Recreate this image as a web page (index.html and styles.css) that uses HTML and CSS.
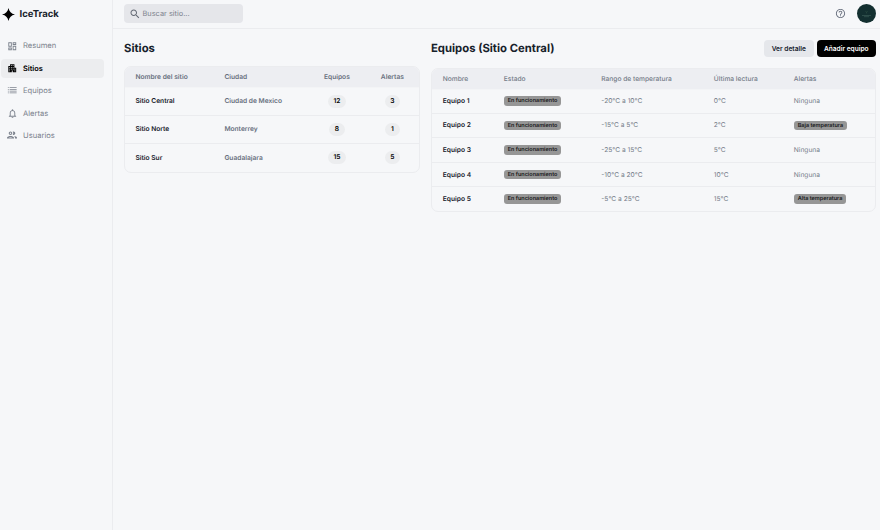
FILE: index.html
```html
<!DOCTYPE html>
<html lang="es">
<head>
<meta charset="utf-8">
<title>IceTrack</title>
<link rel="stylesheet" href="styles.css">
</head>
<body>
<div class="app">
  <aside class="sidebar">
    <div class="brand">
      <svg class="logo" viewBox="0 0 24 24"><path d="M12 0C13.5 7 17 10.500 24 12C17 13.500 13.500 17 12 24C10.500 17 7 13.500 0 12C7 10.500 10.500 7 12 0Z"/></svg>
      <span>IceTrack</span>
    </div>
    <nav class="nav">
      <a class="item"><svg viewBox="0 0 24 24"><path d="M19 5v2h-4V5h4M9 5v6H5V5h4m10 8v6h-4v-6h4M9 17v2H5v-2h4M21 3h-8v6h8V3zM11 3H3v10h8V3zm10 8h-8v10h8V11zm-10 4H3v6h8v-6z"/></svg><span>Resumen</span></a>
      <a class="item active"><svg viewBox="0 0 24 24"><path d="M17 11V3H7v4H3v14h8v-4h2v4h8V11h-4zM7 19H5v-2h2v2zm0-4H5v-2h2v2zm0-4H5V9h2v2zm4 4H9v-2h2v2zm0-4H9V9h2v2zm0-4H9V5h2v2zm4 8h-2v-2h2v2zm0-4h-2V9h2v2zm0-4h-2V5h2v2zm4 12h-2v-2h2v2zm0-4h-2v-2h2v2z"/></svg><span>Sitios</span></a>
      <a class="item"><svg viewBox="0 0 24 24"><path d="M2 5h2v2H2zM2 9h2v2H2zM2 13h2v2H2zM2 17h2v2H2zM6 5h16v2H6zM6 9h16v2H6zM6 13h16v2H6zM6 17h16v2H6z"/></svg><span>Equipos</span></a>
      <a class="item"><svg class="bell" viewBox="0 0 24 24"><path d="M12 22c1.100 0 2-.9 2-2h-4c0 1.100.9 2 2 2zm6-6v-5c0-3.070-1.630-5.640-4.500-6.320V4c0-.83-.67-1.500-1.500-1.500s-1.500.67-1.500 1.500v.68C7.640 5.360 6 7.920 6 11v5l-2 2v1h16v-1l-2-2zm-2 1H8v-6c0-2.480 1.510-4.500 4-4.500s4 2.020 4 4.500v6z"/></svg><span>Alertas</span></a>
      <a class="item"><svg class="wide" viewBox="0 0 24 24"><path d="M9 13.750c-2.340 0-7 1.170-7 3.500V19h14v-1.750c0-2.330-4.660-3.500-7-3.500zM4.340 17c.84-.58 2.870-1.250 4.660-1.250s3.820.67 4.660 1.250H4.340zM9 12c1.930 0 3.500-1.570 3.500-3.500S10.930 5 9 5 5.500 6.570 5.500 8.500 7.070 12 9 12zm0-5c.83 0 1.500.67 1.500 1.500S9.830 10 9 10s-1.500-.67-1.500-1.500S8.170 7 9 7zm7.040 6.810c1.160.84 1.960 1.960 1.960 3.440V19h4v-1.750c0-2.020-3.500-3.170-5.960-3.440zM15 12c1.930 0 3.500-1.570 3.500-3.500S16.930 5 15 5c-.54 0-1.040.13-1.500.35.630.89 1 1.980 1 3.150s-.37 2.260-1 3.150c.46.22.96.35 1.500.35z"/></svg><span>Usuarios</span></a>
    </nav>
  </aside>
  <div class="page">
    <header class="topbar">
      <div class="search"><svg viewBox="0 0 24 24"><path d="M15.500 14h-.79l-.28-.27C15.410 12.590 16 11.110 16 9.500 16 5.910 13.090 3 9.500 3S3 5.910 3 9.500 5.910 16 9.500 16c1.610 0 3.090-.59 4.230-1.570l.27.28v.79l5 4.990L20.490 19l-4.990-5zm-6 0C7.010 14 5 11.990 5 9.500S7.010 5 9.500 5 14 7.010 14 9.500 11.990 14 9.500 14z"/></svg><span>Buscar sitio...</span></div>
      <div class="tools">
        <svg class="help" viewBox="0 0 24 24"><path d="M11 18h2v-2h-2v2zm1-16C6.480 2 2 6.480 2 12s4.480 10 10 10 10-4.480 10-10S17.520 2 12 2zm0 18c-4.410 0-8-3.590-8-8s3.590-8 8-8 8 3.590 8 8-3.590 8-8 8zm0-14c-2.210 0-4 1.790-4 4h2c0-1.100.9-2 2-2s2 .9 2 2c0 2-3 1.750-3 5h2c0-2.250 3-2.500 3-5 0-2.210-1.790-4-4-4z"/></svg>
        <svg class="avatar" viewBox="0 0 19 19"><circle cx="9.500" cy="9.500" r="9.500" fill="#132f30"/><path d="M8.500 7.500l1 .9 1-1.400M9.500 8.400v1" stroke="#315346" stroke-width=".6" fill="none"/><path d="M5 11.500h9M7 12.700h5" stroke="#40605a" stroke-width=".6"/></svg>
      </div>
    </header>
    <main class="content">
      <section class="sites">
        <h1>Sitios</h1>
        <div class="table">
          <div class="row head"><span>Nombre del sitio</span><span>Ciudad</span><span class="mid">Equipos</span><span class="mid">Alertas</span></div>
          <div class="row"><b>Sitio Central</b><span>Ciudad de Mexico</span><span class="mid"><i>12</i></span><span class="mid"><i>3</i></span></div>
          <div class="row"><b>Sitio Norte</b><span>Monterrey</span><span class="mid"><i>8</i></span><span class="mid"><i>1</i></span></div>
          <div class="row"><b>Sitio Sur</b><span>Guadalajara</span><span class="mid"><i>15</i></span><span class="mid"><i>5</i></span></div>
        </div>
      </section>
      <section class="units">
        <div class="title"><h1>Equipos (Sitio Central)</h1><div class="actions"><button>Ver detalle</button><button class="primary">Añadir equipo</button></div></div>
        <div class="table">
          <div class="row head"><span>Nombre</span><span>Estado</span><span>Rango de temperatura</span><span>Última lectura</span><span>Alertas</span></div>
          <div class="row"><b>Equipo 1</b><span><em>En funcionamiento</em></span><span>-20°C a 10°C</span><span>0°C</span><span>Ninguna</span></div>
          <div class="row"><b>Equipo 2</b><span><em>En funcionamiento</em></span><span>-15°C a 5°C</span><span>2°C</span><span><em>Baja temperatura</em></span></div>
          <div class="row"><b>Equipo 3</b><span><em>En funcionamiento</em></span><span>-25°C a 15°C</span><span>5°C</span><span>Ninguna</span></div>
          <div class="row"><b>Equipo 4</b><span><em>En funcionamiento</em></span><span>-10°C a 20°C</span><span>10°C</span><span>Ninguna</span></div>
          <div class="row"><b>Equipo 5</b><span><em>En funcionamiento</em></span><span>-5°C a 25°C</span><span>15°C</span><span><em>Alta temperatura</em></span></div>
        </div>
      </section>
    </main>
  </div>
</div>
</body>
</html>
```
FILE: styles.css
```css
* { box-sizing: border-box; }
body { margin: 0; background: #f6f7f9; color: #16212b; font-family: Inter, "Liberation Sans", sans-serif; font-size: 6.65px; text-rendering: geometricPrecision; }
svg { display: block; flex: none; fill: currentColor; }
.app { display: flex; height: 530px; overflow: hidden; }
.sidebar { width: 113px; flex: none; border-right: 1px solid #ebecef; }
.brand { display: flex; align-items: center; height: 28px; padding-left: 2px; gap: 4.5px; font-size: 9.5px; font-weight: 700; }
.logo { width: 13px; height: 13px; color: #000; }
.nav { display: flex; flex-direction: column; gap: 3.4px; padding: 8.4px 8px 0 1px; }
.item { display: flex; align-items: center; height: 19px; gap: 6px; padding-left: 6px; border-radius: 4px; color: #7c828d; font-size: 7.6px; }
.item svg { width: 10.5px; height: 10.5px; margin: 0 -.25px; }
.item .bell { width: 11px; height: 11px; margin: 0 -.5px; }
.item .wide { width: 12px; height: 12px; margin: 0 -1px; }
.item.active { background: #ecedef; color: #000; font-weight: 600; }
.item.active span { font-size: 7.4px; }
.page { flex: 1; min-width: 0; }
.topbar { display: flex; align-items: center; justify-content: space-between; height: 29px; padding: 0 4px 1px 11px; border-bottom: 1px solid #ebecef; }
.search { display: flex; align-items: center; gap: 1.5px; width: 119px; height: 19px; padding-left: 5px; border-radius: 4px; background: #e5e6ea; color: #7c828d; font-size: 7.4px; }
.search svg { width: 12px; height: 12px; color: #626873; }
.tools { display: flex; align-items: center; gap: 11px; color: #6b7280; }
.help { width: 11px; height: 11px; }
.avatar { width: 19px; height: 19px; }
.content { display: flex; gap: 11px; padding: 11px 4px 0 11px; }
.sites { width: 296px; flex: none; }
.units { flex: 1; }
h1 { margin: 0; font-size: 11.3px; line-height: 16px; font-weight: 700; }
.sites h1 { height: 26px; }
.title { display: flex; justify-content: space-between; height: 27.6px; }
.title h1 { line-height: 17px; }
.actions { display: flex; gap: 3px; }
button { height: 17px; margin: 0; padding: 0; width: 49.500px; border: 0; border-radius: 4px; background: #e5e7eb; color: #16212b; font: 600 6.6px Inter, "Liberation Sans", sans-serif; }
button.primary { width: 59.500px; background: #000; color: #fff; }
.table { border: 1px solid #ebecef; border-radius: 7px; overflow: hidden; }
.row { display: grid; align-items: center; border-top: 1px solid #ebecef; color: #747b88; }
.row.head { border-top: 0; background: #edeef2; }
.row b { color: #16212b; font-weight: 600; }
.sites .row { grid-template-columns: 89px 84px 57px 54px; height: 28.500px; padding-left: 10.400px; font-weight: 600; color: #68707e; }
.sites .head { height: 20px; }
.sites .head + .row { height: 27.5px; border-top-color: #f3f4f6; }
.mid { text-align: center; }
.row i { display: inline-block; min-width: 15px; padding: 0 5.500px; line-height: 13px; border-radius: 7px; background: #ecedef; color: #000; font-style: normal; }
.units .row { grid-template-columns: 61px 97.500px 112.500px 80px 1fr; height: 24.600px; padding-left: 10.800px; }
.units .head { height: 20px; color: #747b88; font-weight: 500; }
.units .head + .row { height: 24px; border-top-color: #f3f4f6; }
.row em { display: flex; align-items: center; width: max-content; height: 9.600px; line-height: 8px; padding: .6px 3.900px 0; border-radius: 3px; background: #969696; color: #16181a; font-size: 5.5px; font-weight: 600; font-style: normal; }
```
